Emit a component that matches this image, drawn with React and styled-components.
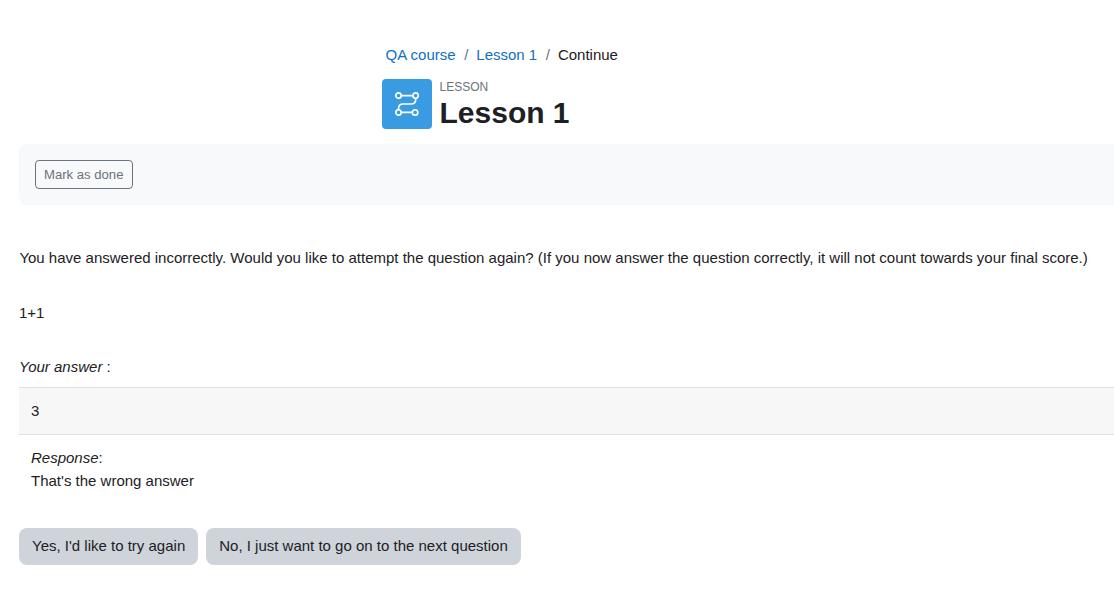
import React from 'react';
import styled, { createGlobalStyle } from 'styled-components';

const crumbs = [
    { label: 'QA course', href: '#course' },
    { label: 'Lesson 1', href: '#lesson' },
    { label: 'Continue' },
];

function LessonIcon() {
    return (
        <svg width="24" height="24" viewBox="0 0 24 24" fill="none" stroke="#fff" strokeWidth="1.65">
            <circle cx="3.5" cy="3.6" r="2.7" />
            <circle cx="20.6" cy="3.6" r="2.7" />
            <circle cx="3.5" cy="20.4" r="2.7" />
            <circle cx="20.1" cy="20.4" r="2.7" />
            <path d="M6.2 3.6H17.9M6.2 20.4H17.4" />
            <path d="M20.7 6.3V7.5C20.7 10.3 18.7 12 15.9 12H8.3C5.5 12 3.5 13.7 3.5 16.5V17.7" />
        </svg>
    );
}

function App() {
    return (
        <Page>
            <GlobalStyle />
            <Header>
                <Breadcrumb>
                    {crumbs.map(({ label, href }) => (
                        <Crumb key={label}>
                            {href ? <a href={href}>{label}</a> : label}
                        </Crumb>
                    ))}
                </Breadcrumb>
                <Heading>
                    <IconBox>
                        <LessonIcon />
                    </IconBox>
                    <div>
                        <ActivityType>Lesson</ActivityType>
                        <Title>Lesson 1</Title>
                    </div>
                </Heading>
            </Header>

            <ActivityBar>
                <DoneButton>Mark as done</DoneButton>
            </ActivityBar>

            <Feedback>
                You have answered incorrectly. Would you like to attempt the question again?
                {' '}(If you now answer the question correctly, it will not count towards your final score.)
            </Feedback>
            <Question>1+1</Question>
            <AnswerLabel><em>Your answer</em> :</AnswerLabel>
            <Answer>3</Answer>
            <Response>
                <em>Response</em>:<br />
                That's the wrong answer
            </Response>

            <Actions>
                <Button>Yes, I'd like to try again</Button>
                <Button>No, I just want to go on to the next question</Button>
            </Actions>
        </Page>
    );
}

export default App;

const GlobalStyle = createGlobalStyle`
    * {
        box-sizing: border-box;
    }

    body {
        margin: 0;
        background: #fff;
        color: #1d2125;
        font-family: "Liberation Sans", Arial, sans-serif;
        font-size: 15px;
        line-height: 22.5px;
        overflow: hidden;
    }

    button {
        font-family: inherit;
        cursor: pointer;
    }
`;

const Page = styled.main`
    padding: 44px 0 0 19px;
`;

const Header = styled.header`
    padding-left: 363px;
`;

const Breadcrumb = styled.ol`
    display: flex;
    height: 23px;
    margin: 0 0 12px;
    padding: 0 0 0 3.6px;
    list-style: none;
`;

const Crumb = styled.li`
    a {
        color: #0f6fc5;
        text-decoration: none;
    }

    & + &::before {
        content: "/";
        padding: 0 8px 0 8.5px;
        color: #6a737b;
    }
`;

const Heading = styled.div`
    display: flex;
    gap: 7.5px;
    height: 50px;
`;

const IconBox = styled.div`
    display: flex;
    align-items: center;
    justify-content: center;
    width: 50px;
    height: 50px;
    border-radius: 4px;
    background: #399be2;
`;

const ActivityType = styled.div`
    color: #6a737b;
    font-size: 12px;
    line-height: 16px;
    text-transform: uppercase;
`;

const Title = styled.h1`
    margin: 0;
    font-size: 30px;
    font-weight: 700;
    line-height: 36px;
`;

const ActivityBar = styled.div`
    height: 61px;
    margin-top: 15px;
    padding: 16px;
    border-radius: 8px 0 0 8px;
    background: #f8f9fa;
`;

const DoneButton = styled.button`
    display: block;
    height: 29px;
    padding: 0 8.5px 0 8px;
    border: 1px solid #6a737b;
    border-radius: 4px;
    background: transparent;
    color: #6a737b;
    font-size: 13.125px;
`;

const Feedback = styled.p`
    height: 23px;
    margin: 42px 0 32px;
    padding-left: 0.4px;
    white-space: nowrap;
`;

const Question = styled.div`
    height: 23px;
    margin-bottom: 31px;
`;

const AnswerLabel = styled.div`
    height: 23px;
    margin-bottom: 8px;
`;

const Answer = styled.div`
    height: 48px;
    padding: 12px;
    border: solid #dee2e6;
    border-width: 1px 0;
    background: #f7f7f7;
`;

const Response = styled.div`
    padding: 12px;
`;

const Actions = styled.div`
    display: flex;
    gap: 8px;
    margin-top: 24px;
`;

const Button = styled.button`
    height: 37px;
    padding: 0 13px 2px;
    border: 0;
    border-radius: 8px;
    background: #ced4da;
    color: #1d2125;
    font-size: 15px;
`;
